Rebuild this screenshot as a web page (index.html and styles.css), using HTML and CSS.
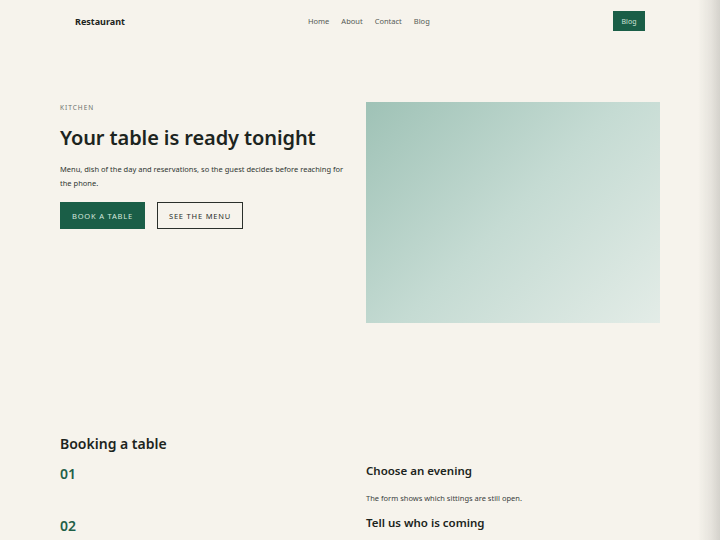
FILE: index.html
```html
<!DOCTYPE html>
<html lang="en">
<head>
<meta charset="utf-8">
<title>Restaurant</title>
<link rel="stylesheet" href="styles.css">
</head>
<body>
<header class="topbar">
  <div class="brand">Restaurant</div>
  <nav class="nav">
    <a href="#">Home</a>
    <a href="#">About</a>
    <a href="#">Contact</a>
    <a href="#">Blog</a>
  </nav>
  <a class="nav-cta" href="#">Blog</a>
</header>

<section class="hero">
  <div class="hero-text">
    <div class="eyebrow">KITCHEN</div>
    <h1 class="hero-title">Your table is ready tonight</h1>
    <p class="hero-lead">Menu, dish of the day and reservations, so the guest decides before reaching for the phone.</p>
    <div class="actions">
      <a class="btn btn-primary" href="#">BOOK A TABLE</a>
      <a class="btn btn-outline" href="#">SEE THE MENU</a>
    </div>
  </div>
  <div class="hero-media"></div>
</section>

<section class="steps">
  <h2 class="steps-title">Booking a table</h2>
  <div class="step">
    <div class="step-num">01</div>
    <div class="step-body">
      <h3 class="step-title">Choose an evening</h3>
      <p class="step-text">The form shows which sittings are still open.</p>
    </div>
  </div>
  <div class="step">
    <div class="step-num">02</div>
    <div class="step-body">
      <h3 class="step-title">Tell us who is coming</h3>
    </div>
  </div>
</section>
<div class="edge-shade"></div>
</body>
</html>
```

FILE: styles.css
```css
* { box-sizing: border-box; }
html, body { margin: 0; padding: 0; }
body {
  background: #f6f3ec;
  color: #1c2420;
  font-family: "Noto Sans", "Liberation Sans", sans-serif;
  overflow: hidden;
}
a { text-decoration: none; color: inherit; }

.topbar {
  width: 600px;
  margin: 0 auto;
  height: 42px;
  padding: 0 15px;
  display: flex;
  align-items: center;
}
.brand {
  font-size: 9px;
  font-weight: 700;
  color: #1c2420;
  width: 120px;
}
.nav {
  display: flex;
  gap: 12px;
  font-size: 7.5px;
  color: #555a55;
  margin-left: 113px;
}
.nav-cta {
  width: 32px;
  height: 20px;
  margin-left: auto;
  background: #1a5e47;
  color: #cfe3d8;
  font-size: 7px;
  display: flex;
  align-items: center;
  justify-content: center;
}

.hero {
  width: 600px;
  margin: 60px auto 0;
  display: grid;
  grid-template-columns: 290px 294px;
  column-gap: 16px;
  align-items: start;
}
.hero-text { padding-top: 1px; }
.eyebrow {
  font-size: 6.5px;
  letter-spacing: 1px;
  color: #6c706b;
  line-height: 10px;
}
.hero-title {
  margin: 12px 0 0;
  font-size: 20px;
  font-weight: 600;
  line-height: 26px;
  color: #1c2420;
  letter-spacing: -0.1px;
}
.hero-lead {
  margin: 11px 0 0;
  font-size: 7.5px;
  line-height: 14px;
  color: #2f3531;
}
.actions {
  display: flex;
  gap: 12px;
  margin-top: 12px;
}
.btn {
  height: 27px;
  display: flex;
  align-items: center;
  justify-content: center;
  font-size: 7.5px;
  letter-spacing: 0.8px;
}
.btn-primary {
  width: 85px;
  background: #1a5e47;
  color: #d6e8de;
}
.btn-outline {
  width: 86px;
  border: 1px solid #2a2f2b;
  color: #2a2f2b;
}
.hero-media {
  height: 221px;
  background: linear-gradient(135deg, #9fc2b6 0%, #c5dbd3 50%, #e3ece7 100%);
}

.steps {
  width: 600px;
  margin: 112px auto 0;
}
.steps-title {
  margin: 0;
  font-size: 14px;
  font-weight: 600;
  line-height: 18px;
  color: #1c2420;
}
.step {
  display: grid;
  grid-template-columns: 290px 294px;
  column-gap: 16px;
  margin-top: 10px;
}
.step + .step { margin-top: 11px; }
.step-num {
  font-size: 14px;
  font-weight: 600;
  color: #1f5f48;
  line-height: 18px;
  padding-top: 2px;
}
.step-title {
  margin: 0;
  font-size: 11.5px;
  font-weight: 600;
  line-height: 16px;
  color: #1c2420;
}
.step-text {
  margin: 13px 0 0;
  font-size: 7.5px;
  line-height: 12px;
  color: #3a403c;
}
.edge-shade {
  position: fixed;
  top: 0;
  right: 0;
  width: 22px;
  height: 100%;
  background: linear-gradient(90deg, rgba(200,198,192,0) 0%, rgba(200,198,192,0.35) 60%, rgba(190,188,182,0.6) 100%);
  pointer-events: none;
}
```
